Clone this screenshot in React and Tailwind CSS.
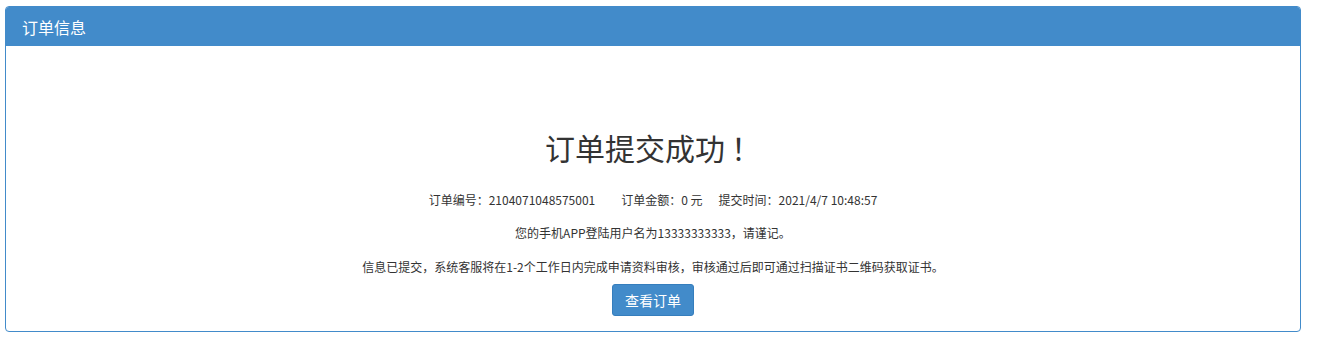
import React from 'react';

const font = { fontFamily: '"Noto Sans CJK SC", "Noto Sans", sans-serif' };

const App = () => {
  return (
    <div className="w-[1322px] h-[347px] bg-white pt-[6px] pl-[5px]" style={font}>
      <div className="w-[1296px] border border-[#428bca] rounded-[4px] overflow-hidden">
        {/* Header */}
        <div className="h-[39px] bg-[#428bca] flex items-center px-[16px]">
          <span className="text-white text-[16px] leading-none">订单信息</span>
        </div>

        {/* Body */}
        <div className="flex flex-col items-center text-[#333333] pb-[15px]">
          <h1 className="mt-[85px] text-[30px] leading-[33px] h-[33px] flex">
            <span>订单提交成功</span>
            <span className="pl-[6px]">！</span>
          </h1>
          <div className="mt-[26px] text-[12px] leading-[20px] flex">
            <span className="mr-[26px]">订单编号：2104071048575001</span>
            <span className="mr-[16px]">订单金额：0 元</span>
            <span>提交时间：2021/4/7 10:48:57</span>
          </div>
          <p className="mt-[13px] text-[12px] leading-[20px]">您的手机APP登陆用户名为13333333333，请谨记。</p>
          <p className="mt-[14px] text-[12px] leading-[20px]">
            信息已提交，系统客服将在1-2个工作日内完成申请资料审核，审核通过后即可通过扫描证书二维码获取证书。
          </p>
          <button className="mt-[7px] h-[32px] px-[12px] bg-[#428bca] border border-[#357ebd] rounded-[3px] text-white text-[14px] leading-[20px]">
            查看订单
          </button>
        </div>
      </div>
    </div>
  );
};

export default App;
